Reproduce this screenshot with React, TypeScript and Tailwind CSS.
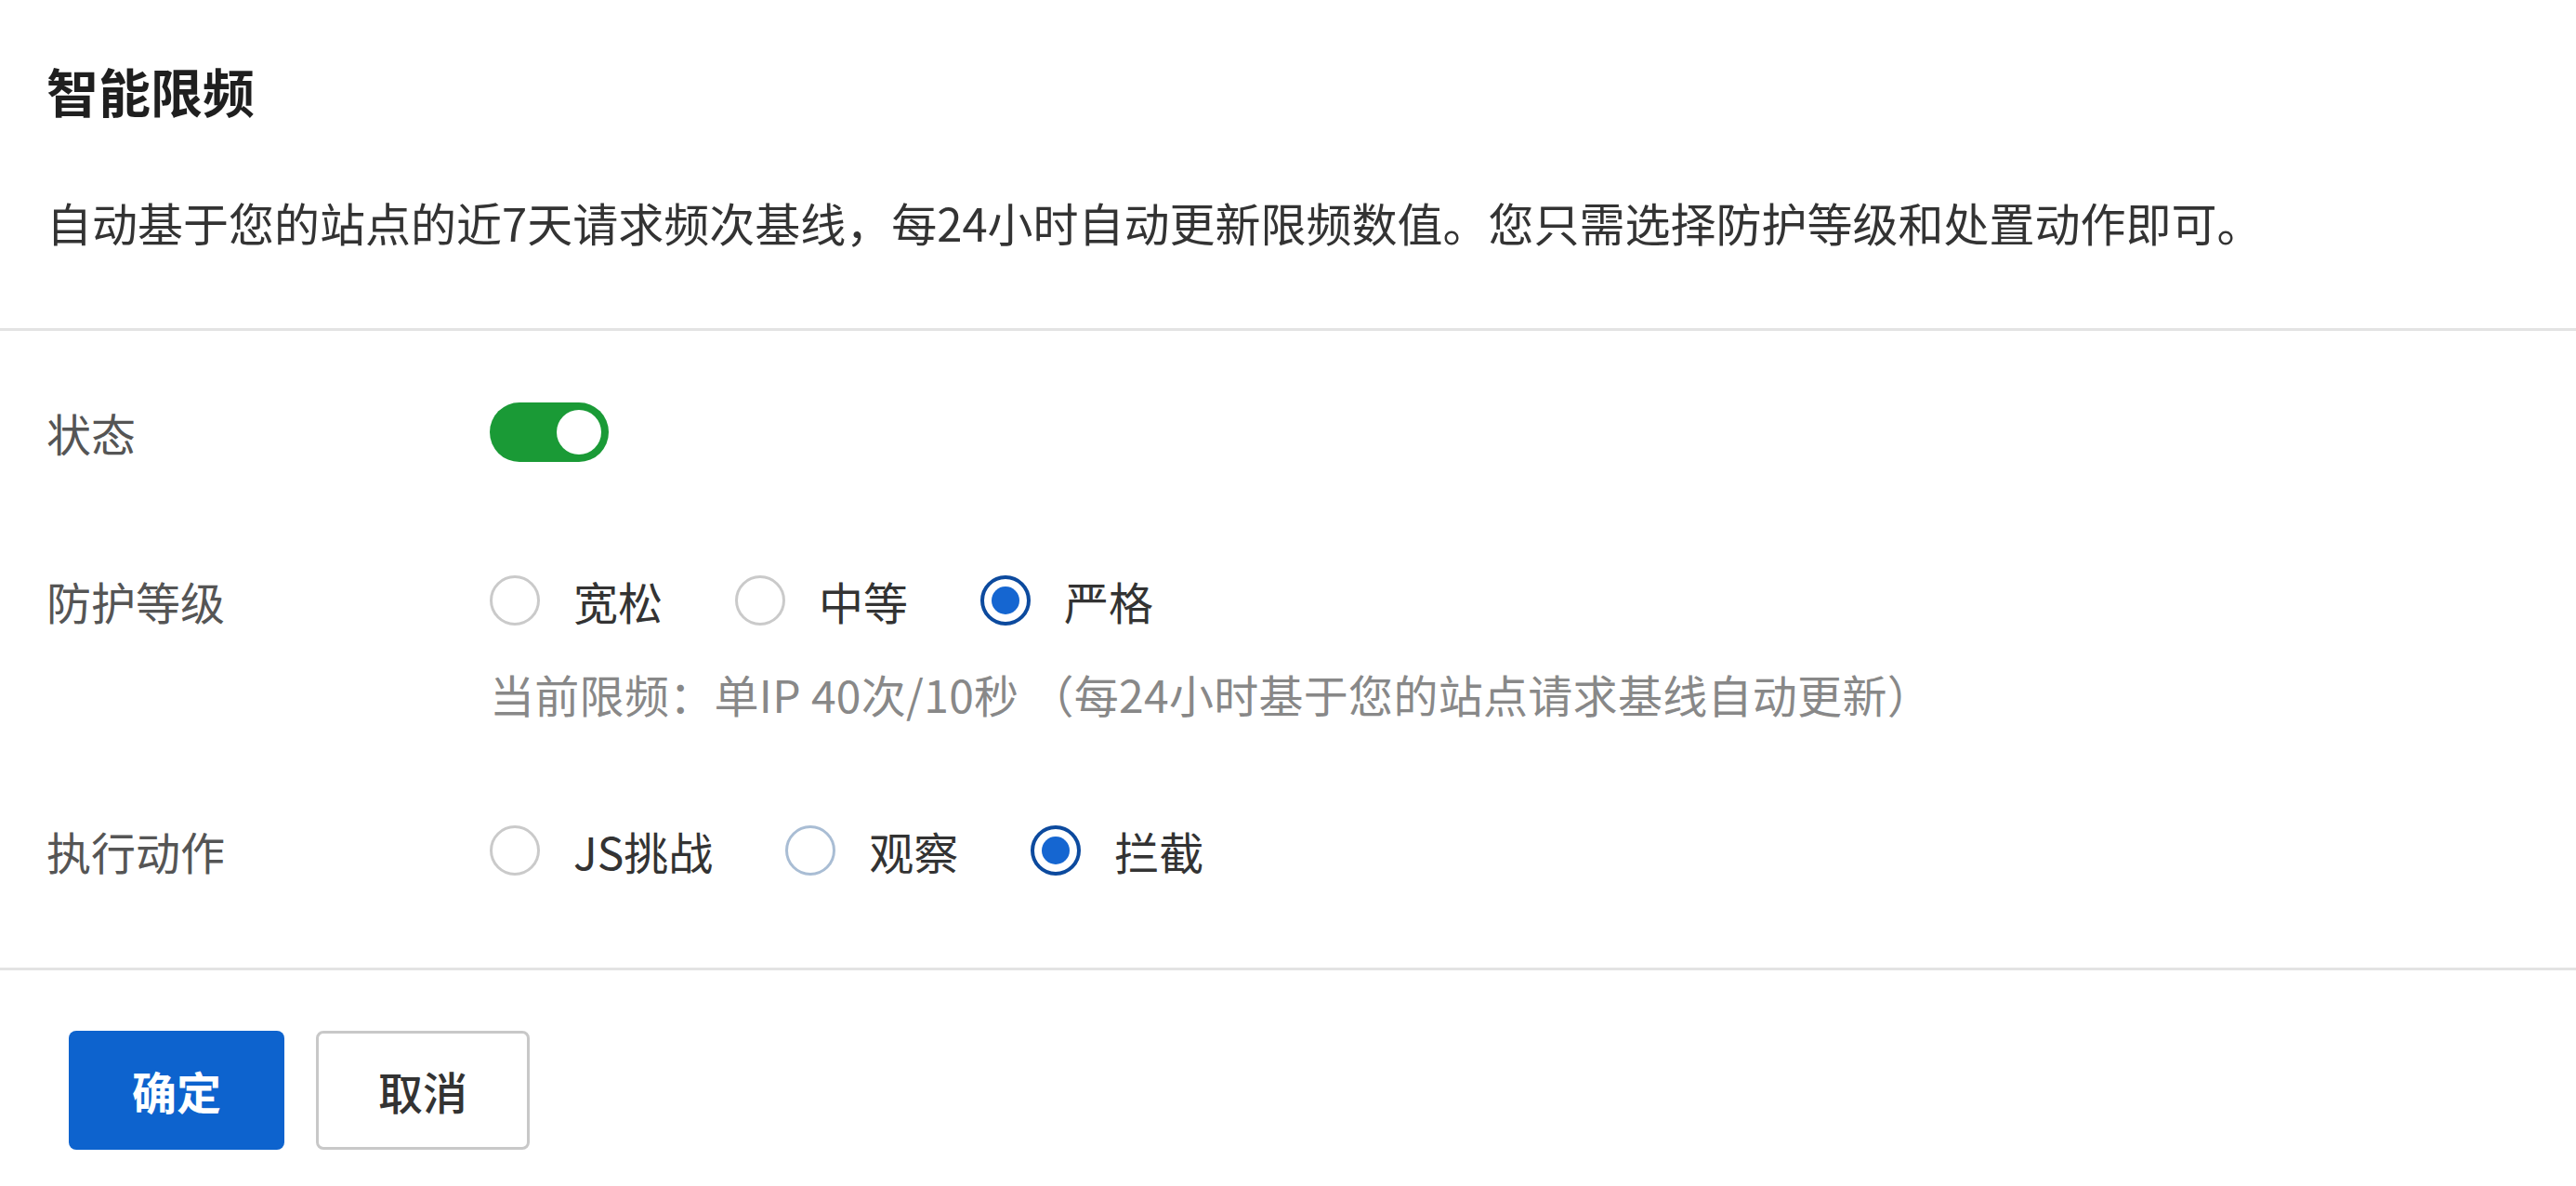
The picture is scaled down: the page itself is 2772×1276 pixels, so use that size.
import { useState } from "react";
import clsx from "clsx";

type Option = { value: string; label: string };

const levels: Option[] = [
  { value: "loose", label: "宽松" },
  { value: "normal", label: "中等" },
  { value: "strict", label: "严格" },
];

const actions: Option[] = [
  { value: "js", label: "JS挑战" },
  { value: "watch", label: "观察" },
  { value: "block", label: "拦截" },
];

function Radio({
  checked,
  hovered,
  label,
  onClick,
}: {
  checked: boolean;
  hovered?: boolean;
  label: string;
  onClick: () => void;
}) {
  return (
    <button
      type="button"
      onClick={onClick}
      className="flex items-center gap-[36px] h-[64px] cursor-pointer"
    >
      <span
        className={clsx(
          "size-[54px] rounded-full flex items-center justify-center bg-white",
          checked
            ? "border-[4px] border-[#0c4a9e]"
            : hovered
              ? "border-[3px] border-[#a9bdd4]"
              : "border-[3px] border-[#cacaca]",
        )}
      >
        {checked && <span className="size-[30px] rounded-full bg-[#1566d1]" />}
      </span>
      <span className="text-[48px] leading-[64px] text-[#333]">{label}</span>
    </button>
  );
}

function FormRow({
  label,
  children,
}: {
  label: string;
  children: React.ReactNode;
}) {
  return (
    <div className="flex items-start">
      <div className="w-[477px] shrink-0 text-[48px] leading-[64px] text-[#555]">
        {label}
      </div>
      <div className="flex flex-col">{children}</div>
    </div>
  );
}

export default function App() {
  const [enabled, setEnabled] = useState(true);
  const [level, setLevel] = useState("strict");
  const [action, setAction] = useState("block");

  return (
    <div className="w-[2772px] h-[1276px] bg-white font-['Noto_Sans_CJK_SC',sans-serif] overflow-hidden">
      {/* Header */}
      <div className="px-[50px] pt-[58px] pb-[80px] border-b-[3px] border-[#e3e3e3]">
        <h2 className="text-[56px] leading-[78px] font-bold text-[#1f1f1f]">
          智能限频
        </h2>
        <p className="mt-[69px] text-[49px] leading-[68px] text-[#333]">
          自动基于您的站点的近7天请求频次基线，每24小时自动更新限频数值。您只需选择防护等级和处置动作即可。
        </p>
      </div>

      {/* Form */}
      <div className="px-[50px] pt-[77px] pb-[94px] border-b-[3px] border-[#e3e3e3] flex flex-col">
        <FormRow label="状态">
          <button
            type="button"
            onClick={() => setEnabled((v) => !v)}
            className={clsx(
              "w-[128px] h-[64px] rounded-full p-[8px] flex items-center cursor-pointer",
              enabled ? "bg-[#1a9a36] justify-end" : "bg-[#c9c9c9] justify-start",
            )}
          >
            <span className="size-[48px] rounded-full bg-white" />
          </button>
        </FormRow>

        <div className="mt-[117px]">
          <FormRow label="防护等级">
            <div className="flex items-center gap-[78px]">
              {levels.map((o) => (
                <Radio
                  key={o.value}
                  label={o.label}
                  checked={level === o.value}
                  onClick={() => setLevel(o.value)}
                />
              ))}
            </div>
            <div className="mt-[36px] text-[48px] leading-[64px] text-[#888] tracking-[0.3px]">
              当前限频：单IP 40次/10秒 （每24小时基于您的站点请求基线自动更新）
            </div>
          </FormRow>
        </div>

        <div className="mt-[105px]">
          <FormRow label="执行动作">
            <div className="flex items-center gap-[78px]">
              {actions.map((o) => (
                <Radio
                  key={o.value}
                  label={o.label}
                  hovered={o.value === "watch"}
                  checked={action === o.value}
                  onClick={() => setAction(o.value)}
                />
              ))}
            </div>
          </FormRow>
        </div>
      </div>

      {/* Footer */}
      <div className="px-[74px] pt-[65px] flex gap-[34px]">
        <button
          type="button"
          className="w-[232px] h-[128px] rounded-[8px] bg-[#0d63ce] text-white text-[48px] font-bold"
        >
          确定
        </button>
        <button
          type="button"
          className="w-[230px] h-[128px] rounded-[8px] bg-white border-[3px] border-[#c8c8c8] text-[#333] text-[48px] font-medium"
        >
          取消
        </button>
      </div>
    </div>
  );
}
